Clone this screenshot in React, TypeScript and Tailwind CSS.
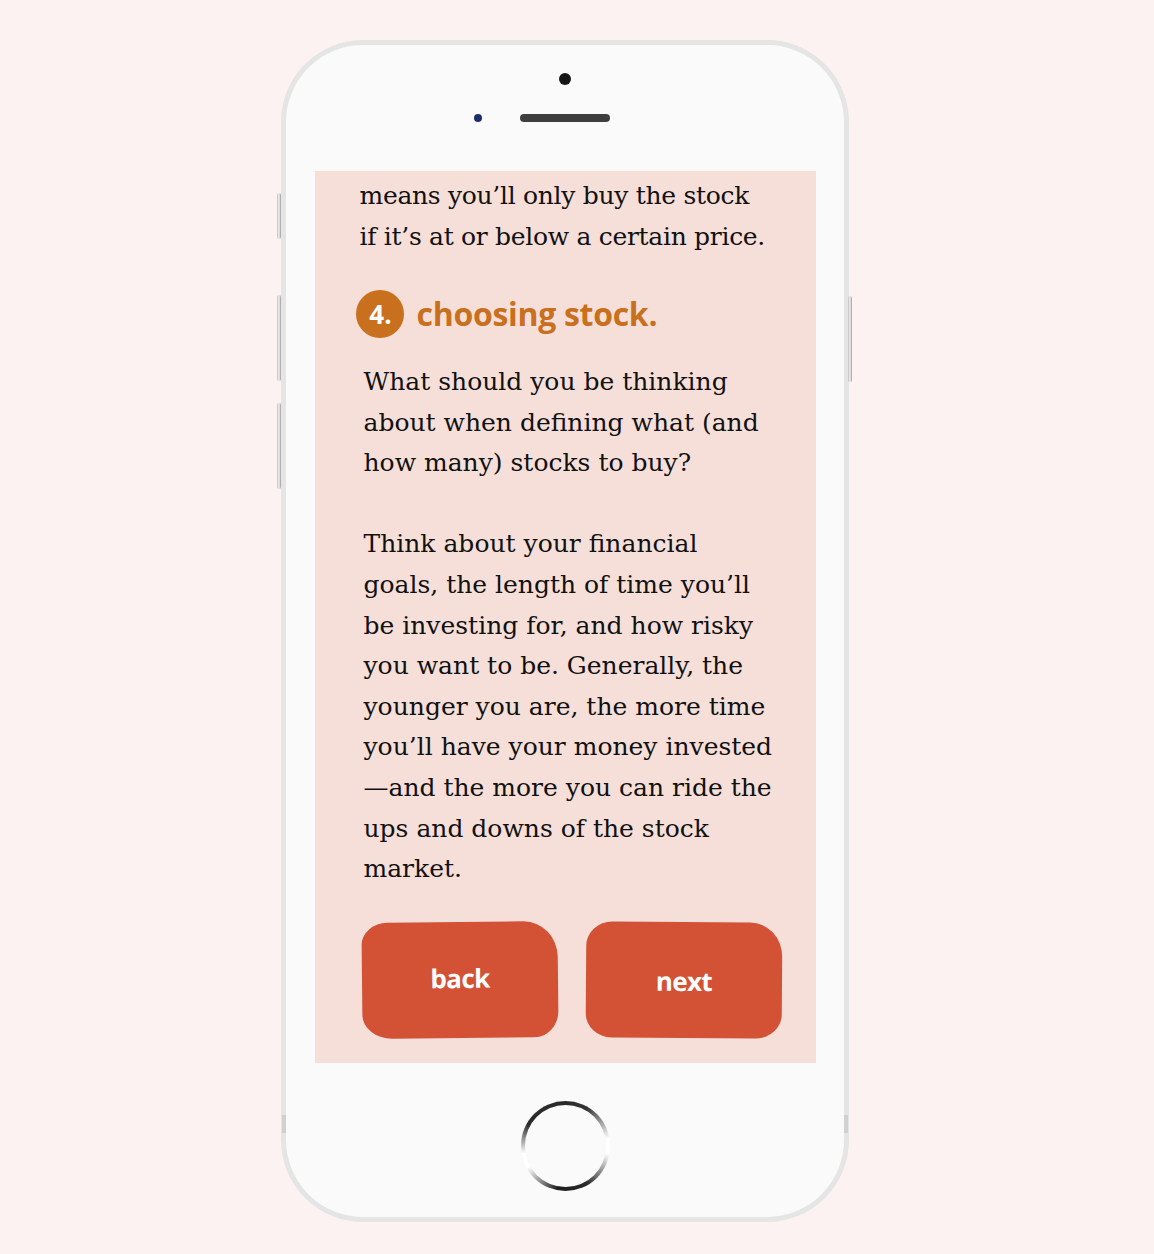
import React from 'react';

const serif = { fontFamily: '"DejaVu Serif", "Liberation Serif", serif' };
const sans = { fontFamily: '"Open Sans", Roboto, "Liberation Sans", sans-serif' };

const SideButton: React.FC<{ className: string }> = ({ className }) => (
  <div
    className={`absolute w-[4px] rounded-[2px] bg-gradient-to-r from-[#bdbdbd] via-[#f4f4f4] to-[#9a9a9a] ${className}`}
  />
);

const BlobButton: React.FC<{ label: string; shape: string; textClass: string }> = ({ label, shape, textClass }) => (
  <button
    className={`flex h-[116px] w-[196px] items-center justify-center bg-[#d35235] text-white ${shape}`}
  >
    <span className={`text-[26px] font-bold tracking-tight ${textClass}`} style={sans}>
      {label}
    </span>
  </button>
);

export default function App() {
  return (
    <div className="min-h-[1254px] w-full bg-[#fdf2f2] pt-[40px]">
      <div className="relative ml-[281px] h-[1182px] w-[568px]">
        {/* side buttons */}
        <SideButton className="-left-[4px] top-[153px] h-[46px]" />
        <SideButton className="-left-[4px] top-[255px] h-[86px]" />
        <SideButton className="-left-[4px] top-[363px] h-[86px]" />
        <SideButton className="-right-[3px] top-[256px] h-[86px]" />

        <div className="flex h-full w-full flex-col items-center rounded-[82px] border-[5px] border-[#e5e5e5] bg-[#fafafa]">
          {/* antenna marks */}
          <div className="absolute left-[1px] top-[1075px] h-[18px] w-[4px] bg-[#d0d0d0]" />
          <div className="absolute right-[1px] top-[1075px] h-[18px] w-[4px] bg-[#d0d0d0]" />

          {/* camera + speaker */}
          <div className="mt-[28px] h-[12px] w-[12px] rounded-full bg-[#161616]" />
          <div className="relative mt-[29px] flex w-full justify-center">
            <div className="absolute left-[188px] top-[0px] h-[8px] w-[8px] rounded-full bg-[#1b2f6e]" />
            <div className="h-[8px] w-[90px] rounded-full bg-[#3e3e3e]" />
          </div>

          {/* screen */}
          <div className="mt-[49px] h-[892px] w-[501px] overflow-hidden bg-[#f6dfd9] text-[#111]">
            <p className="ml-[45px] mt-[5px] text-[25px] leading-[40.5px] tracking-[-0.3px]" style={serif}>
              means you’ll only buy the stock
              <br />
              if it’s at or below a certain price.
            </p>

            <div className="ml-[41px] mt-[33px] flex items-center gap-[13px]">
              <div
                className="flex h-[48px] w-[48px] items-center justify-center rounded-full bg-[#c9701f] pl-[2px] text-[26px] font-bold text-white"
                style={sans}
              >
                4.
              </div>
              <h2 className="text-[32px] font-bold tracking-[-0.3px] text-[#c9701f]" style={sans}>
                choosing stock.
              </h2>
            </div>

            <div className="ml-[49px] mt-[24px] text-[25px] leading-[40.6px]" style={serif}>
              <p>
                What should you be thinking
                <br />
                about when defining what (and
                <br />
                how many) stocks to buy?
              </p>
              <p className="mt-[40.6px]">
                Think about your financial
                <br />
                goals, the length of time you’ll
                <br />
                be investing for, and how risky
                <br />
                you want to be. Generally, the
                <br />
                younger you are, the more time
                <br />
                you’ll have your money invested
                <br />
                —and the more you can ride the
                <br />
                ups and downs of the stock
                <br />
                market.
              </p>
            </div>

            <div className="ml-[47px] mt-[32px] flex gap-[28px]">
              <BlobButton
                label="back"
                shape="rounded-[26px_34px_24px_30px/22px_36px_26px_24px] -rotate-[0.6deg]"
                textClass="-mt-[4px]"
              />
              <BlobButton
                label="next"
                shape="rounded-[26px_32px_26px_26px/24px_34px_24px_24px] rotate-[0.4deg]"
                textClass="mt-[2px]"
              />
            </div>
          </div>

          {/* home button */}
          <div className="mt-[38px] flex h-[90px] w-[89px] items-center justify-center rounded-full bg-[conic-gradient(from_0deg,#2a2a2a_0deg,#333_30deg,#ffffff_80deg,#ffffff_100deg,#2a2a2a_150deg,#1c1c1c_190deg,#ffffff_240deg,#ffffff_260deg,#2a2a2a_300deg,#2a2a2a_360deg)]">
            <div className="h-[82px] w-[81px] rounded-full bg-[#fafafa]" />
          </div>
        </div>
      </div>
    </div>
  );
}
